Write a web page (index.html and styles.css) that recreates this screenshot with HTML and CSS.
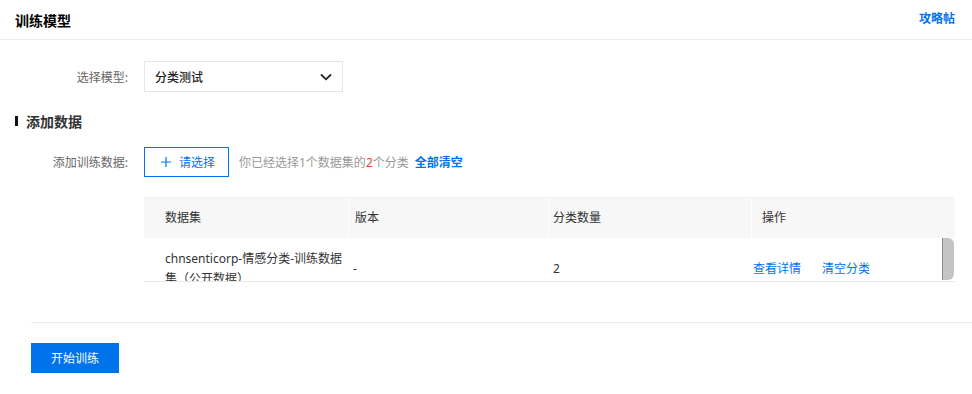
FILE: index.html
```html
<!DOCTYPE html>
<html lang="zh-CN">
<head>
    <meta charset="UTF-8">
    <meta name="viewport" content="width=device-width, initial-scale=1.0">
    <title>训练模型</title>
    <link rel="stylesheet" href="styles.css">
</head>
<body>

    <div class="topbar">
        <span class="page-title">训练模型</span>
        <a class="guide-link" href="#">攻略帖</a>
    </div>

    <div class="form-row first-row">
        <label class="form-label">选择模型:</label>
        <div class="select-box">
            <span>分类测试</span>
            <svg class="chevron" width="12" height="8" viewBox="0 0 12 8">
                <path d="M1 1.5 L6 6.3 L11 1.5" fill="none" stroke="#222" stroke-width="1.8"/>
            </svg>
        </div>
    </div>

    <div class="section-title">添加数据</div>

    <div class="form-row add-row">
        <label class="form-label">添加训练数据:</label>
        <button class="choose-btn">
            <svg width="10" height="10" viewBox="0 0 10 10">
                <path d="M5 0 V10 M0 5 H10" stroke="#0073eb" stroke-width="1.2"/>
            </svg>
            请选择
        </button>
        <span class="hint">你已经选择1个数据集的<em>2</em>个分类</span>
        <a class="clear-all" href="#">全部清空</a>
    </div>

    <div class="data-table">
        <div class="table-head">
            <div class="cell c1">数据集</div>
            <div class="cell c2">版本</div>
            <div class="cell c3">分类数量</div>
            <div class="cell c4">操作</div>
        </div>
        <div class="table-body">
            <div class="table-row">
                <div class="cell c1"><span class="ds-name">chnsenticorp-情感分类-训练数据集（公开数据）</span></div>
                <div class="cell c2">-</div>
                <div class="cell c3">2</div>
                <div class="cell c4 ops">
                    <a href="#">查看详情</a>
                    <a href="#">清空分类</a>
                </div>
            </div>
            <div class="scroll-thumb"></div>
        </div>
    </div>

    <div class="footer">
        <button class="start-btn">开始训练</button>
    </div>

</body>
</html>
```

FILE: styles.css
```css
body {
    margin: 0;
    font-family: "Noto Sans", "Noto Sans CJK SC", sans-serif;
    font-size: 12px;
    color: #333;
    background: #fff;
}
a {
    color: #0073eb;
    text-decoration: none;
}
.topbar {
    display: flex;
    justify-content: space-between;
    align-items: center;
    height: 39px;
    padding: 0 17px 0 15px;
    border-bottom: 1px solid #ebebeb;
}
.page-title {
    font-size: 14px;
    font-weight: bold;
    color: #000;
}
.guide-link {
    font-weight: bold;
    margin-top: -3px;
}
.form-row {
    display: flex;
    align-items: center;
}
.form-label {
    width: 128px;
    margin-right: 16px;
    text-align: right;
    color: #666;
}
.first-row {
    margin-top: 21px;
}
.select-box {
    display: flex;
    justify-content: space-between;
    align-items: center;
    width: 177px;
    height: 29px;
    padding: 0 10px;
    border: 1px solid #e6e6e6;
    color: #222;
    font-weight: 500;
}
.section-title {
    display: flex;
    align-items: center;
    margin: 19px 0 0 15px;
    height: 20px;
    font-size: 14px;
    font-weight: bold;
    color: #333;
}
.section-title::before {
    content: "";
    width: 3px;
    height: 10px;
    background: #111;
    margin-right: 8px;
}
.add-row {
    margin-top: 16px;
}
.choose-btn {
    display: flex;
    align-items: center;
    gap: 8px;
    height: 30px;
    width: 85px;
    padding: 0 0 0 16px;
    border: 1px solid #0073eb;
    background: #fff;
    color: #0073eb;
    font-family: inherit;
    font-size: 12px;
    cursor: pointer;
}
.hint {
    margin-left: 10px;
    color: #999;
}
.hint em {
    font-style: normal;
    color: #f33;
}
.clear-all {
    margin-left: 6px;
    font-weight: bold;
}
.data-table {
    margin: 20px 17px 0 144px;
}
.table-head, .table-row {
    display: grid;
    grid-template-columns: 204px 200px 203px 1fr;
}
.table-head {
    background: #f7f7f7;
    border-top: 1px solid #f0f0f0;
    height: 40px;
    align-items: center;
}
.table-head .cell {
    height: 40px;
    line-height: 40px;
    border-left: 1px solid #fff;
}
.table-head .c1 { padding-left: 21px; border-left: none; }
.table-head .c2 { padding-left: 6px; }
.table-head .c3 { padding-left: 4px; }
.table-head .c4 { padding-left: 10px; }
.table-body {
    position: relative;
    height: 43px;
    overflow: hidden;
    border-bottom: 1px solid #e8e8e8;
}
.table-row {
    align-items: center;
    padding: 11px 0 10px;
    line-height: 20px;
}
.table-row .c1 { padding: 0 0 0 21px; }
.table-row .c2 { padding-left: 5px; }
.table-row .c3 { padding-left: 5px; }
.table-row .c4 { padding-left: 2px; }
.ops {
    display: flex;
    gap: 21px;
}
.scroll-thumb {
    position: absolute;
    top: 0;
    right: 1px;
    width: 11px;
    height: 42px;
    background: #c4c4c4;
    border-left: 1px solid #8c8c8c;
    border-radius: 0 6px 6px 0;
}
.footer {
    margin: 40px 0 0 31px;
    border-top: 1px solid #ebebeb;
    padding-top: 20px;
}
.start-btn {
    width: 88px;
    height: 30px;
    border: none;
    background: #0073eb;
    color: #fff;
    font-family: inherit;
    font-size: 12px;
    cursor: pointer;
}
```
